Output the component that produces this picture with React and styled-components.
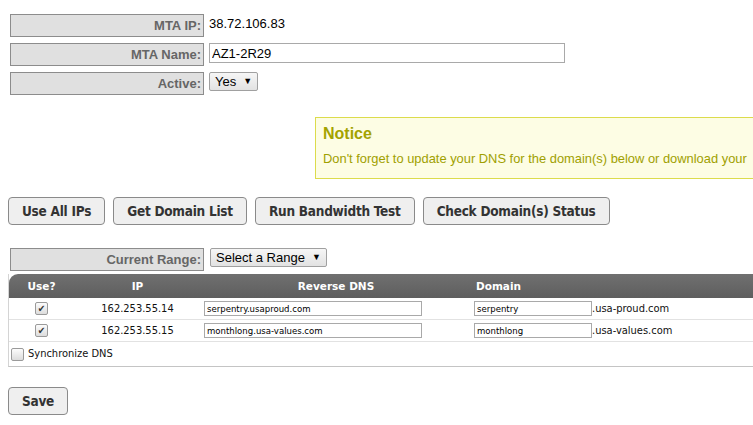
import React from "react";
import styled, { createGlobalStyle } from "styled-components";

const rows = [
  { ip: "162.253.55.14", rdns: "serpentry.usaproud.com", domain: "serpentry", suffix: ".usa-proud.com" },
  { ip: "162.253.55.15", rdns: "monthlong.usa-values.com", domain: "monthlong", suffix: ".usa-values.com" },
];

function App() {
  return (
    <Page>
      <GlobalStyle />
      <Form>
        <FieldRow>
          <Label>MTA IP:</Label>
          <Value>38.72.106.83</Value>
        </FieldRow>
        <FieldRow>
          <Label>MTA Name:</Label>
          <TextInput defaultValue="AZ1-2R29" />
        </FieldRow>
        <FieldRow>
          <Label>Active:</Label>
          <SelectBox>
            Yes <Caret>▼</Caret>
          </SelectBox>
        </FieldRow>
      </Form>

      <Notice>
        <NoticeTitle>Notice</NoticeTitle>
        <NoticeText>Don't forget to update your DNS for the domain(s) below or download your</NoticeText>
      </Notice>

      <Toolbar>
        <Button>Use All IPs</Button>
        <Button>Get Domain List</Button>
        <Button>Run Bandwidth Test</Button>
        <Button>Check Domain(s) Status</Button>
      </Toolbar>

      <RangeRow>
        <Label>Current Range:</Label>
        <SelectBox>
          Select a Range <Caret>▼</Caret>
        </SelectBox>
      </RangeRow>

      <Table>
        <thead>
          <tr>
            <Th $w={65}>Use?</Th>
            <Th $w={127}>IP</Th>
            <Th $w={270}>Reverse DNS</Th>
            <Th $align="left">Domain</Th>
          </tr>
        </thead>
        <tbody>
          {rows.map((r) => (
            <tr key={r.ip}>
              <Td $align="center">
                <Check $checked>✔</Check>
              </Td>
              <Td $align="center">{r.ip}</Td>
              <Td>
                <CellInput $w={218} defaultValue={r.rdns} />
              </Td>
              <Td>
                <CellInput $w={118} defaultValue={r.domain} />
                <Suffix>{r.suffix}</Suffix>
              </Td>
            </tr>
          ))}
          <tr>
            <SyncCell colSpan={4}>
              <Check />
              Synchronize DNS
            </SyncCell>
          </tr>
        </tbody>
      </Table>

      <SaveButton>Save</SaveButton>
    </Page>
  );
}

const GlobalStyle = createGlobalStyle`
  html {
    overflow: hidden;
  }
  body {
    margin: 8px 0 8px 8px;
    overflow: hidden;
    background: #fff;
    font-family: "Liberation Sans", Arial, sans-serif;
  }
`;

const Page = styled.div`
  width: 900px;
  padding-top: 6px;
`;

const Form = styled.div`
  display: flex;
  flex-direction: column;
  gap: 6px;
  padding-left: 2px;
`;

const FieldRow = styled.div`
  display: flex;
  align-items: flex-start;
  gap: 5px;
  height: 23px;
`;

const Label = styled.div`
  box-sizing: border-box;
  width: 194px;
  height: 23px;
  padding: 3px 2px 0 0;
  text-align: right;
  background: #e0e0e0;
  border: 1px solid #8c8c8c;
  color: #666;
  font: bold 13px "Liberation Sans", Arial, sans-serif;
`;

const Value = styled.div`
  padding-top: 2px;
  font-size: 13px;
  color: #000;
`;

const TextInput = styled.input`
  box-sizing: border-box;
  width: 356px;
  height: 20px;
  margin: 0;
  padding: 0 2px;
  border: 1px solid #a9a9a9;
  font: 13px "Liberation Sans", Arial, sans-serif;
  color: #000;
  outline: none;
`;

const SelectBox = styled.div`
  box-sizing: border-box;
  display: inline-flex;
  align-items: center;
  gap: 7px;
  height: 19px;
  padding: 0 5px;
  border: 1px solid #a0a0a0;
  border-radius: 2px;
  background: linear-gradient(#f6f6f6, #e2e2e2);
  font: 13px "Liberation Sans", Arial, sans-serif;
  color: #000;
`;

const Caret = styled.span`
  font-size: 9px;
  margin-top: -2px;
`;

const Notice = styled.div`
  box-sizing: border-box;
  width: 520px;
  height: 62px;
  margin: 22px 0 0 307px;
  padding: 7px 7px;
  background: #fdfde4;
  border: 1px solid #dcdc4c;
`;

const NoticeTitle = styled.div`
  font: bold 16px "Liberation Sans", Arial, sans-serif;
  color: #a3a300;
`;

const NoticeText = styled.div`
  margin-top: 8px;
  font-size: 12.9px;
  color: #a0a000;
  white-space: nowrap;
`;

const Toolbar = styled.div`
  display: flex;
  gap: 8px;
  margin-top: 18px;
`;

const Button = styled.button`
  box-sizing: border-box;
  height: 28px;
  margin: 0;
  padding: 0 13px;
  background: #efefef;
  border: 1px solid #8a8a8a;
  border-radius: 4px;
  color: #333;
  font: bold 13.5px "DejaVu Sans Condensed", Tahoma, sans-serif;
  letter-spacing: -0.25px;
`;

const RangeRow = styled(FieldRow)`
  margin-top: 23px;
  padding-left: 2px;
  gap: 6px;
`;

const Table = styled.table`
  width: 830px;
  margin-top: 3px;
  table-layout: fixed;
  border-collapse: separate;
  border-spacing: 0;
  border-left: 1px solid #d4d4d4;
  border-bottom: 1px solid #c4c4c4;
  font: 11px "DejaVu Sans Condensed", Tahoma, sans-serif;
  color: #111;
`;

const Th = styled.th`
  box-sizing: border-box;
  height: 24px;
  width: ${(p) => (p.$w ? `${p.$w}px` : "auto")};
  padding: 0 5px;
  text-align: ${(p) => p.$align || "center"};
  background: linear-gradient(#707070, #5e5e5e);
  color: #fff;
  font: bold 10.5px "DejaVu Sans", Verdana, sans-serif;
  &:first-child {
    border-top-left-radius: 9px;
  }
`;

const Td = styled.td`
  box-sizing: border-box;
  height: 22px;
  padding: 0 3px;
  text-align: ${(p) => p.$align || "left"};
  border-bottom: 1px solid #e2e2e2;
  white-space: nowrap;
`;

const CellInput = styled.input`
  box-sizing: border-box;
  width: ${(p) => p.$w}px;
  height: 15px;
  margin: 0;
  padding: 0 2px;
  border: 1px solid #a9a9a9;
  font: 9.5px "DejaVu Sans Condensed", Tahoma, sans-serif;
  color: #000;
  vertical-align: middle;
  outline: none;
`;

const Suffix = styled.span`
  font-size: 11px;
  vertical-align: middle;
`;

const Check = styled.span`
  box-sizing: border-box;
  display: inline-flex;
  align-items: center;
  justify-content: center;
  width: 13px;
  height: 13px;
  border: 1px solid #9a9a9a;
  border-radius: 2px;
  background: linear-gradient(#fcfcfc, #dcdcdc);
  color: #333;
  font-size: 10px;
  line-height: 1;
  vertical-align: middle;
  margin-right: ${(p) => (p.$checked ? "0" : "4px")};
`;

const SyncCell = styled.td`
  height: 24px;
  padding: 0 2px;
  white-space: nowrap;
`;

const SaveButton = styled(Button)`
  margin-top: 20px;
`;

export default App;
